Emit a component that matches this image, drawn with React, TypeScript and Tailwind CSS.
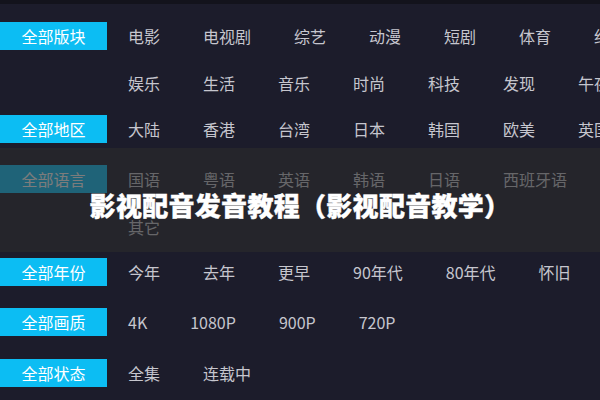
import React from "react";

type Section = {
  label: string;
  lines: string[][];
  mt: string;
  lineGap?: string;
};

const sections: Section[] = [
  {
    label: "全部版块",
    mt: "mt-[22px]",
    lineGap: "gap-[19px]",
    lines: [
      ["电影", "电视剧", "综艺", "动漫", "短剧", "体育", "纪录片"],
      ["娱乐", "生活", "音乐", "时尚", "科技", "发现", "午夜"],
    ],
  },
  {
    label: "全部地区",
    mt: "mt-[18px]",
    lines: [["大陆", "香港", "台湾", "日本", "韩国", "欧美", "英国"]],
  },
  {
    label: "全部语言",
    mt: "mt-[22px]",
    lineGap: "gap-[20px]",
    lines: [["国语", "粤语", "英语", "韩语", "日语", "西班牙语"], ["其它"]],
  },
  {
    label: "全部年份",
    mt: "mt-[17px]",
    lines: [["今年", "去年", "更早", "90年代", "80年代", "怀旧"]],
  },
  {
    label: "全部画质",
    mt: "mt-[22px]",
    lines: [["4K", "1080P", "900P", "720P"]],
  },
  {
    label: "全部状态",
    mt: "mt-[23px]",
    lines: [["全集", "连载中"]],
  },
];

function FilterSection({ section }: { section: Section }) {
  return (
    <div className={`flex flex-col ${section.mt} ${section.lineGap ?? ""}`}>
      {section.lines.map((items, i) => (
        <div key={i} className="flex h-[28px] items-center whitespace-nowrap">
          <div
            className={`w-[107px] h-[28px] shrink-0 flex items-center justify-center text-[16px] text-white ${
              i === 0 ? "bg-[#0cbdf3]" : ""
            }`}
          >
            {i === 0 ? section.label : ""}
          </div>
          <div className="flex gap-[43px] ml-[21px] text-[16px] text-[#c6c6ce]">
            {items.map((it) => (
              <span key={it} className="cursor-pointer hover:text-white">
                {it}
              </span>
            ))}
          </div>
        </div>
      ))}
    </div>
  );
}

export default function App() {
  return (
    <div
      className="relative w-[600px] h-[400px] overflow-hidden bg-[#1c1c2b]"
      style={{ fontFamily: '"Noto Sans CJK SC", "Noto Sans", sans-serif' }}
    >
      <div className="h-[4px] bg-[#13131c]" />
      <div className="flex flex-col -mt-[4px]">
        {sections.map((s) => (
          <FilterSection key={s.label} section={s} />
        ))}
      </div>

      {/* title banner over the list */}
      <div className="absolute left-0 right-0 top-[148px] h-[104px] bg-[rgba(44,44,44,0.62)] flex items-center justify-center">
        <h1 className="text-[26px] leading-none font-black text-white tracking-[0.3px] [-webkit-text-stroke:0.4px_white] mt-[10px]">
          影视配音发音教程（影视配音教学）
        </h1>
      </div>
    </div>
  );
}
